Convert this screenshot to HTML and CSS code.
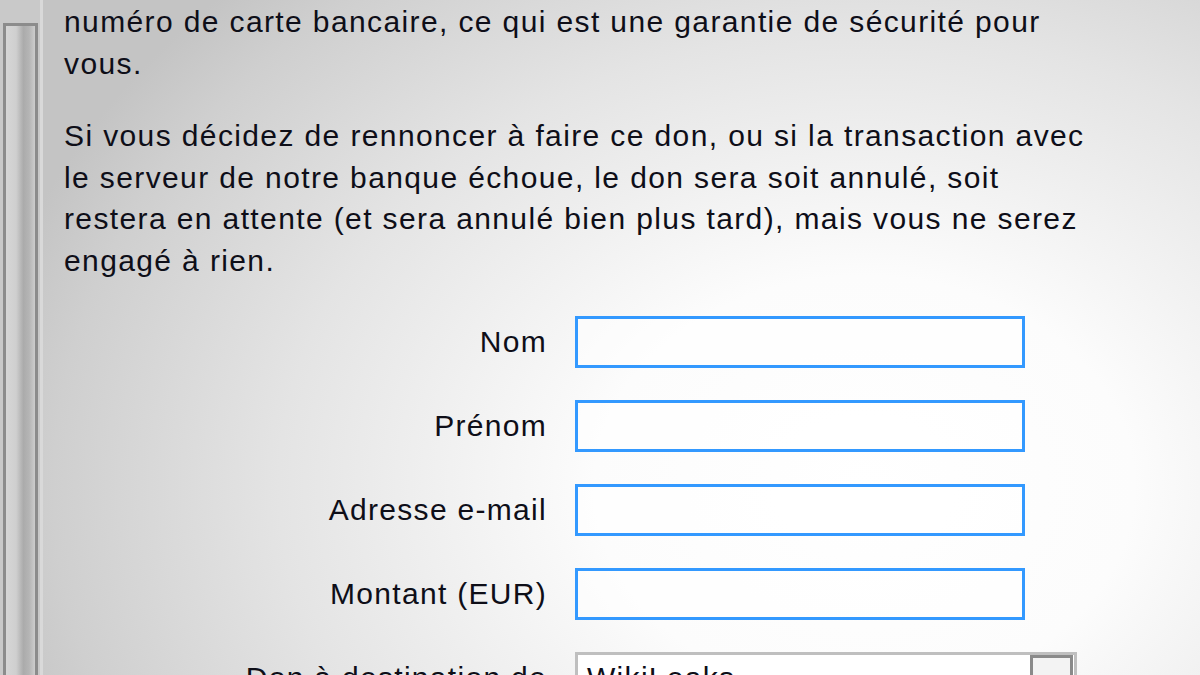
FILE: index.html
```html
<!DOCTYPE html>
<html lang="fr">
<head>
<meta charset="utf-8">
<title>Don</title>
<link rel="stylesheet" href="styles.css">
</head>
<body>
<div class="page">
  <div class="sidebar">
    <div class="track"></div>
  </div>
  <div class="content">
    <p class="para first">numéro de carte bancaire, ce qui est une garantie de sécurité pour vous.</p>
    <p class="para">Si vous décidez de rennoncer à faire ce don, ou si la transaction avec le serveur de notre banque échoue, le don sera soit annulé, soit restera en attente (et sera annulé bien plus tard), mais vous ne serez engagé à rien.</p>
    <form class="form">
      <div class="row"><label class="label">Nom</label><span class="input"></span></div>
      <div class="row"><label class="label">Prénom</label><span class="input"></span></div>
      <div class="row"><label class="label">Adresse e-mail</label><span class="input"></span></div>
      <div class="row"><label class="label">Montant (EUR)</label><span class="input"></span></div>
      <div class="row"><label class="label">Don à destination de</label><span class="select"><span class="select-text">WikiLeaks</span><span class="select-btn"></span></span></div>
    </form>
  </div>
</div>
</body>
</html>
```
FILE: styles.css
```css
html, body {
  margin: 0;
  padding: 0;
  height: 100%;
  overflow: hidden;
}
body {
  font-family: "Liberation Sans", Arial, sans-serif;
  color: #0e0e18;
  background: radial-gradient(ellipse 900px 700px at 72% 72%, #ffffff 0%, #fcfcfc 30%, #e4e4e4 65%, #cfcfcf 90%, #c4c4c4 100%);
}
.page {
  display: flex;
  height: 675px;
}
.sidebar {
  width: 43px;
  flex: none;
  background: #c9c9c9;
  border-right: 3px solid #d9d9d9;
  padding-top: 23px;
  box-sizing: border-box;
  padding-left: 3px;
  padding-right: 2px;
}
.track {
  height: 100%;
  border: 3px solid #8c8c8c;
  border-bottom: none;
  background: linear-gradient(to right, #d6d6d6 0%, #cfcfcf 35%, #ababab 60%, #b5b5b5 80%, #cdcdcd 100%);
  box-sizing: border-box;
}
.content {
  flex: 1;
  padding-left: 21px;
}
.para {
  font-size: 30px;
  letter-spacing: 1.38px;
  line-height: 41.5px;
  margin: 0 0 31px 0;
  width: 1030px;
}
.para.first {
  margin-top: 1px;
}
.form {
  display: flex;
  flex-direction: column;
  gap: 32px;
  margin-top: 35px;
}
.row {
  display: flex;
  align-items: center;
  gap: 28px;
}
.label {
  width: 483px;
  text-align: right;
  font-size: 30px;
  letter-spacing: 1.3px;
  flex: none;
}
.input {
  width: 450px;
  height: 52px;
  box-sizing: border-box;
  border: 3px solid #3399ff;
  background: rgba(255, 255, 255, 0.55);
  display: block;
}
.select {
  width: 502px;
  height: 52px;
  box-sizing: border-box;
  border: 3px solid #bfbfbf;
  background: #ffffff;
  display: flex;
  align-items: center;
  justify-content: space-between;
  padding-left: 9px;
  padding-right: 1px;
}
.select-text {
  font-size: 30px;
  letter-spacing: 1.3px;
}
.select-btn {
  width: 43px;
  height: 44px;
  box-sizing: border-box;
  border: 3px solid #8a8a8a;
  background: #f3f3f3;
  align-self: flex-start;
}
```
